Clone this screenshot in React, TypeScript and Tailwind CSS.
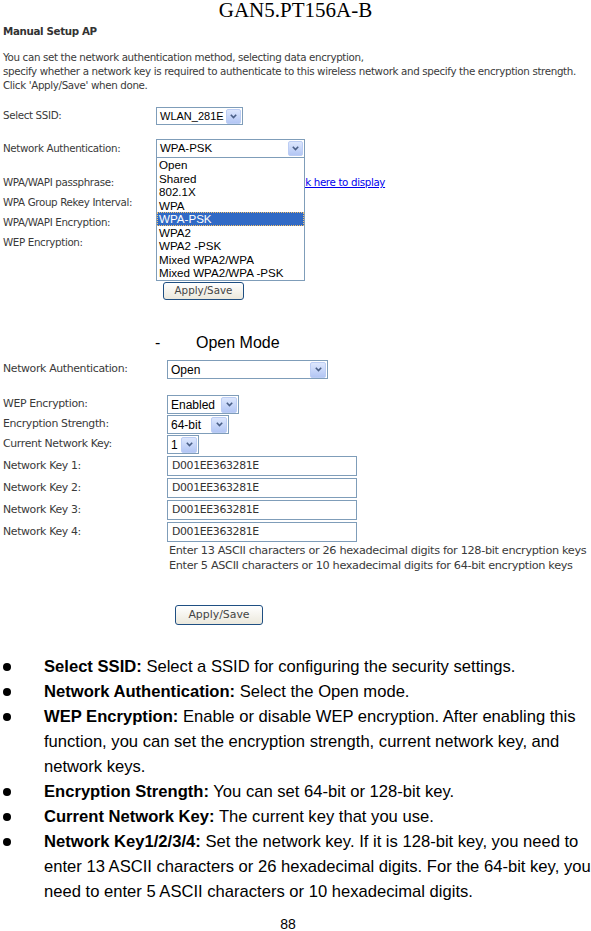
import React from "react";

const ui = "font-['DejaVu_Sans',sans-serif]";

function Arrow({ size }: { size: string }) {
  return (
    <div
      className={`${size} mr-[1px] flex items-center justify-center rounded-[2px] border border-[#bccdf4] bg-gradient-to-b from-[#dde7fd] to-[#b3c6f4]`}
    >
      <svg width="7" height="5" viewBox="0 0 7 5">
        <path d="M0.8 0.8 L3.5 3.6 L6.2 0.8" fill="none" stroke="#4a5f86" strokeWidth="1.6" />
      </svg>
    </div>
  );
}

function Select({
  value,
  box,
  arrow = "w-[15px] h-[15px]",
  text = "text-[11px]",
  children,
}: {
  value: string;
  box: string;
  arrow?: string;
  text?: string;
  children?: React.ReactNode;
}) {
  return (
    <div className={`relative flex items-center border border-[#7f9db9] bg-white ${box}`}>
      <span className={`flex-1 pl-[3px] whitespace-nowrap font-['Liberation_Sans',sans-serif] text-black ${text}`}>
        {value}
      </span>
      <Arrow size={arrow} />
      {children}
    </div>
  );
}

function Button({ box, text }: { box: string; text: string }) {
  return (
    <div
      className={`flex items-center justify-center rounded-[3px] border border-[#1f4f82] bg-gradient-to-b from-white to-[#ebe8dc] ${ui} text-[#444] ${box} ${text}`}
    >
      Apply/Save
    </div>
  );
}

const authOptions = [
  "Open",
  "Shared",
  "802.1X",
  "WPA",
  "WPA-PSK",
  "WPA2",
  "WPA2 -PSK",
  "Mixed WPA2/WPA",
  "Mixed WPA2/WPA -PSK",
];

function Row({ label, h, children, lw, text }: { label: string; h: string; lw: string; text: string; children?: React.ReactNode }) {
  return (
    <div className={`flex items-center ${h}`}>
      <div className={`${lw} shrink-0 pl-[3px] ${ui} ${text} tracking-[-0.35px] text-[#3a3a3a]`}>{label}</div>
      {children}
    </div>
  );
}

const bullets: { head: string; lines: string[] }[] = [
  { head: "Select SSID:", lines: [" Select a SSID for configuring the security settings."] },
  { head: "Network Authentication:", lines: [" Select the Open mode."] },
  {
    head: "WEP Encryption:",
    lines: [
      " Enable or disable WEP encryption. After enabling this",
      "function, you can set the encryption strength, current network key, and",
      "network keys.",
    ],
  },
  { head: "Encryption Strength:", lines: [" You can set 64-bit or 128-bit key."] },
  { head: "Current Network Key:", lines: [" The current key that you use."] },
  {
    head: "Network Key1/2/3/4:",
    lines: [
      " Set the network key. If it is 128-bit key, you need to",
      "enter 13 ASCII characters or 26 hexadecimal digits. For the 64-bit key, you",
      "need to enter 5 ASCII characters or 10 hexadecimal digits.",
    ],
  },
];

export default function App() {
  const s1 = "text-[10.3px]";
  const s2 = "text-[10.9px]";
  return (
    <div className="w-[591px] h-[931px] overflow-hidden bg-white flex flex-col">
      {/* page header */}
      <div className="h-[20px] leading-[20px] text-center font-['Liberation_Serif',serif] text-[21px] text-black">
        GAN5.PT156A-B
      </div>

      {/* manual setup screenshot */}
      <div className={`mt-[4px] h-[14px] leading-[14px] pl-[3px] ${ui} ${s1} font-bold tracking-[-0.35px] text-[#333]`}>
        Manual Setup AP
      </div>
      <div className={`mt-[12px] pl-[3px] ${ui} ${s1} leading-[14px] tracking-[-0.35px] text-[#3a3a3a] whitespace-nowrap`}>
        You can set the network authentication method, selecting data encryption,
        <br />
        specify whether a network key is required to authenticate to this wireless network and specify the encryption strength.
        <br />
        Click 'Apply/Save' when done.
      </div>

      <div className="mt-[15px]">
        <Row label="Select SSID:" h="h-[18px]" lw="w-[156px]" text={s1}>
          <Select value="WLAN_281E" box="w-[87px] h-[18px]" />
        </Row>
      </div>
      <div className="mt-[14px] relative z-10">
        <Row label="Network Authentication:" h="h-[19px]" lw="w-[156px]" text={s1}>
          <Select value="WPA-PSK" box="w-[149px] h-[19px]" text="text-[11.5px]">
            <div className="absolute left-[-1px] top-full w-[149px] border border-[#7f9db9] bg-white font-['Liberation_Sans',sans-serif] text-[11.6px] text-black">
              {authOptions.map((o) => (
                <div
                  key={o}
                  className={`h-[13.5px] leading-[13.5px] pl-[2px] ${
                    o === "WPA-PSK" ? "bg-[#316ac5] text-white outline-1 outline-dotted outline-[#f5c26b] -outline-offset-1" : ""
                  }`}
                >
                  {o}
                </div>
              ))}
            </div>
          </Select>
        </Row>
      </div>
      <div className="mt-[15px]">
        <Row label="WPA/WAPI passphrase:" h="h-[20px]" lw="w-[156px]" text={s1}>
          <div className="w-[128px] h-[18px] border border-[#7f9db9]" />
          <span className={`ml-[4px] ${ui} ${s1} tracking-[-0.35px] text-[#0000ee] underline`}>Click here to display</span>
        </Row>
        <Row label="WPA Group Rekey Interval:" h="h-[20px]" lw="w-[156px]" text={s1} />
        <Row label="WPA/WAPI Encryption:" h="h-[20px]" lw="w-[156px]" text={s1} />
        <Row label="WEP Encryption:" h="h-[20px]" lw="w-[156px]" text={s1} />
      </div>
      <div className="mt-[29px] pl-[163px]">
        <Button box="w-[81px] h-[18px]" text={s1} />
      </div>

      {/* open mode */}
      <div className="mt-[33px] h-[20px] flex items-center font-['Liberation_Sans',sans-serif] text-[16px] text-black">
        <span className="ml-[155px] w-[41px]">-</span>
        <span>Open Mode</span>
      </div>
      <div className="mt-[7px]">
        <Row label="Network Authentication:" h="h-[19px]" lw="w-[167px]" text={s2}>
          <Select value="Open" box="w-[161px] h-[19px]" arrow="w-[16px] h-[16px]" text="text-[12px]" />
        </Row>
      </div>
      <div className="mt-[16px] flex flex-col gap-[1px]">
        <Row label="WEP Encryption:" h="h-[19px]" lw="w-[167px]" text={s2}>
          <Select value="Enabled" box="w-[72px] h-[19px]" arrow="w-[16px] h-[16px]" text="text-[12px]" />
        </Row>
        <Row label="Encryption Strength:" h="h-[19px]" lw="w-[167px]" text={s2}>
          <Select value="64-bit" box="w-[62px] h-[19px]" arrow="w-[16px] h-[16px]" text="text-[12px]" />
        </Row>
        <Row label="Current Network Key:" h="h-[19px]" lw="w-[167px]" text={s2}>
          <Select value="1" box="w-[32px] h-[19px]" arrow="w-[16px] h-[16px]" text="text-[12px]" />
        </Row>
      </div>
      <div className="mt-[2px] flex flex-col gap-[2px]">
        {[1, 2, 3, 4].map((n) => (
          <Row key={n} label={`Network Key ${n}:`} h="h-[20px]" lw="w-[167px]" text={s2}>
            <div className={`w-[190px] h-[20px] border border-[#7f9db9] pl-[4px] flex items-center ${ui} ${s2} tracking-[-0.35px] text-[#333]`}>
              D001EE363281E
            </div>
          </Row>
        ))}
      </div>
      <div className={`mt-[1px] pl-[169px] ${ui} text-[11.3px] leading-[15px] tracking-[-0.35px] text-[#3a3a3a] whitespace-nowrap`}>
        Enter 13 ASCII characters or 26 hexadecimal digits for 128-bit encryption keys
        <br />
        Enter 5 ASCII characters or 10 hexadecimal digits for 64-bit encryption keys
      </div>
      <div className="mt-[32px] pl-[175px]">
        <Button box="w-[88px] h-[20px]" text={s2} />
      </div>

      {/* description */}
      <div className="mt-[29px] flex flex-col font-['Liberation_Sans',sans-serif] text-[16.6px] leading-[25px] text-black">
        {bullets.map((b) => (
          <div key={b.head} className="flex">
            <div className="w-[44px] shrink-0 h-[25px] flex items-center">
              <span className="ml-[3px] w-[8px] h-[8px] rounded-full bg-black" />
            </div>
            <div className="whitespace-nowrap">
              <b>{b.head}</b>
              {b.lines.map((l, i) => (
                <React.Fragment key={i}>
                  {i > 0 && <br />}
                  {l}
                </React.Fragment>
              ))}
            </div>
          </div>
        ))}
      </div>
      <div className="mt-[12px] w-[576px] h-[16px] leading-[16px] text-center font-['Liberation_Sans',sans-serif] text-[14px] text-black">
        88
      </div>
    </div>
  );
}
